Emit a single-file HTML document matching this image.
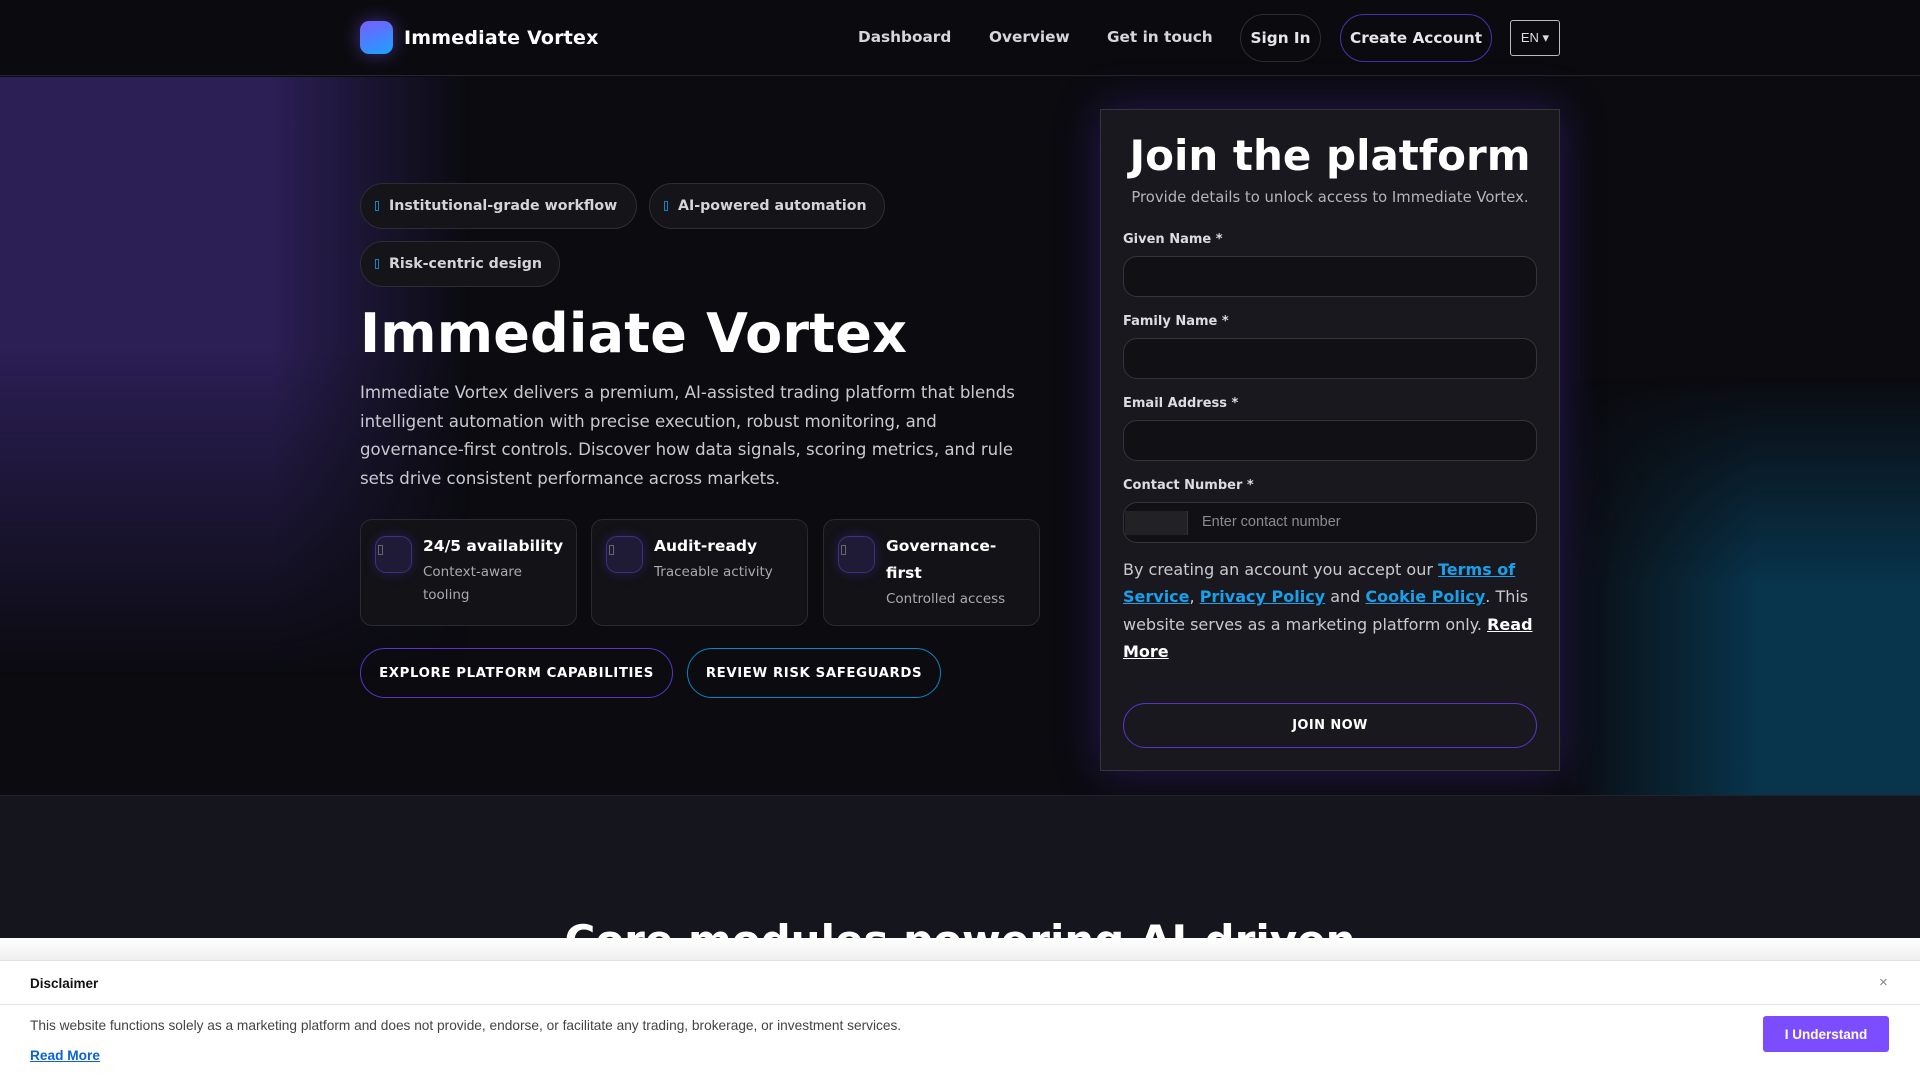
<!DOCTYPE html>
<html><head><meta charset="utf-8"><style>
*{box-sizing:border-box;margin:0;padding:0}
body{width:1920px;height:1080px;overflow:hidden;background:#0b0b10;font-family:"DejaVu Sans","Liberation Sans",sans-serif;color:#fff;position:relative}
.a{position:absolute}
.nav{left:0;top:0;width:1920px;height:76px;background:#0b0b0f;border-bottom:1px solid #25252d}
.logo{left:360px;top:21px;width:33px;height:33px;border-radius:9px;background:linear-gradient(160deg,#7b5cff,#1aa3ff);box-shadow:0 0 18px rgba(120,90,255,.45)}
.brand{left:404px;top:27px;font-size:19px;font-weight:bold;letter-spacing:.2px}
.nl{top:28px;font-size:15.3px;font-weight:bold;color:#d6d6dc}
.pill{border-radius:24px;border:1px solid #2c2c36;height:48px;top:14px;font-size:15.3px;font-weight:bold;color:#e6e6ea;display:flex;align-items:center;justify-content:center}
.hero{left:0;top:77px;width:1920px;height:718px;background:#0b0b10;overflow:hidden}
.gp{left:0;top:0;width:470px;height:600px;background:linear-gradient(to right,#2b1f55 0%,#2b1f55 58%,rgba(43,31,85,.5) 78%,transparent 100%);-webkit-mask-image:linear-gradient(to bottom,#000 0%,#000 45%,transparent 100%);mask-image:linear-gradient(to bottom,#000 0%,#000 45%,transparent 100%)}
.gt{left:1560px;top:300px;width:360px;height:418px;background:linear-gradient(to right,transparent 0%,rgba(8,52,74,.55) 30%,#08344c 55%,#08344c 100%);-webkit-mask-image:linear-gradient(to bottom,transparent 0%,#000 50%,#000 100%);mask-image:linear-gradient(to bottom,transparent 0%,#000 50%,#000 100%)}
.chip{height:46px;border:1px solid #2c2c34;border-radius:23px;background:#141419;display:flex;align-items:center;padding:0 14px;font-size:14.2px;font-weight:bold;color:#d4d4da;white-space:nowrap}
.chip i{display:inline-block;width:4px;height:10px;border:1px solid #1a7fc0;margin-right:10px}
h1{left:360px;top:302px;font-size:54px;font-weight:bold;letter-spacing:.2px;white-space:nowrap}
.p{left:360px;top:379px;width:668px;font-size:16.6px;line-height:28.5px;color:#c9c9d1}
.card{top:519px;width:217px;height:107px;border:1px solid #2a2a32;border-radius:12px;background:#121217}
.ic{left:14px;top:16px;width:37px;height:37px;border:1px solid #3f2f86;border-radius:11px;background:#1f1a35;box-shadow:0 0 12px rgba(90,60,200,.3)}
.ic:before{content:"";position:absolute;left:2px;top:8px;width:3px;height:8px;border:1px solid #666}
.ct{left:62px;top:13px;font-size:15.5px;font-weight:bold;line-height:27px;width:145px}
.cd{font-size:13.5px;color:#a9a9b2;line-height:23px;font-weight:normal;margin-top:1px}
.btn{top:648px;height:50px;border-radius:25px;display:flex;align-items:center;justify-content:center;font-size:13.3px;font-weight:bold;letter-spacing:.6px}
.form{left:1100px;top:109px;width:460px;height:662px;background:#18181e;border:1px solid #34343c;box-shadow:0 0 40px rgba(70,40,160,.45)}
.ft{left:0;width:458px;text-align:center}
.lb{left:22px;font-size:13px;font-weight:bold;color:#dcdce2}
.in{left:22px;width:414px;height:41px;border:1px solid #34343c;border-radius:14px;background:#111115}
.terms{left:22px;top:446px;width:420px;font-size:16px;line-height:27.3px;color:#c9c9d1}
.terms b{color:#1aa0ea;text-decoration:underline}
.terms u{color:#fff;font-weight:bold}
.low{left:0;top:795px;width:1920px;height:285px;background:#15151d;border-top:1px solid #22222a}
.disc{left:0;top:938px;width:1920px;height:142px;background:#fff;font-family:"Liberation Sans",Arial,sans-serif}
</style></head><body>
<div class="a nav"></div>
<div class="a logo"></div>
<div class="a brand">Immediate Vortex</div>
<div class="a nl" style="left:858px">Dashboard</div>
<div class="a nl" style="left:989px">Overview</div>
<div class="a nl" style="left:1107px">Get in touch</div>
<div class="a pill" style="left:1240px;width:81px">Sign In</div>
<div class="a pill" style="left:1340px;width:152px;border-color:#4a2fb0">Create Account</div>
<div class="a" style="left:1510px;top:20px;width:50px;height:36px;border:1px solid #bbb;border-radius:3px;font-size:13px;color:#ddd;display:flex;align-items:center;justify-content:center;font-family:'Liberation Sans',sans-serif">EN ▾</div>

<div class="a hero"><div class="a gp"></div><div class="a gt"></div></div>
<div class="a chip" style="left:360px;top:183px;width:277px"><i></i>Institutional-grade workflow</div>
<div class="a chip" style="left:649px;top:183px;width:236px"><i></i>AI-powered automation</div>
<div class="a chip" style="left:360px;top:241px;width:200px"><i></i>Risk-centric design</div>
<h1 class="a">Immediate Vortex</h1>
<div class="a p">Immediate Vortex delivers a premium, AI-assisted trading platform that blends intelligent automation with precise execution, robust monitoring, and governance-first controls. Discover how data signals, scoring metrics, and rule sets drive consistent performance across markets.</div>

<div class="a card" style="left:360px"><div class="a ic"></div><div class="a ct">24/5 availability<div class="cd">Context-aware tooling</div></div></div>
<div class="a card" style="left:591px"><div class="a ic"></div><div class="a ct">Audit-ready<div class="cd">Traceable activity</div></div></div>
<div class="a card" style="left:823px"><div class="a ic"></div><div class="a ct">Governance-first<div class="cd">Controlled access</div></div></div>

<div class="a btn" style="left:360px;width:313px;border:1px solid #5a34c8">EXPLORE PLATFORM CAPABILITIES</div>
<div class="a btn" style="left:687px;width:254px;border:1px solid #0b86c2">REVIEW RISK SAFEGUARDS</div>

<div class="a form">
<div class="a ft" style="top:21px;font-size:42px;font-weight:bold">Join the platform</div>
<div class="a ft" style="top:79px;font-size:14.8px;color:#b4b4bc">Provide details to unlock access to Immediate Vortex.</div>
<div class="a lb" style="top:122px">Given Name *</div>
<div class="a in" style="top:146px"></div>
<div class="a lb" style="top:204px">Family Name *</div>
<div class="a in" style="top:228px"></div>
<div class="a lb" style="top:286px">Email Address *</div>
<div class="a in" style="top:310px"></div>
<div class="a lb" style="top:368px">Contact Number *</div>
<div class="a in" style="top:392px"><div class="a" style="left:1px;top:8px;width:63px;height:24px;background:#222226;border-right:1px solid #333"></div><div class="a" style="left:78px;top:11px;font-family:'Liberation Sans',sans-serif;font-size:14.5px;color:#8a8a92">Enter contact number</div></div>
<div class="a terms">By creating an account you accept our <b>Terms of Service</b>, <b>Privacy Policy</b> and <b>Cookie Policy</b>. This website serves as a marketing platform only. <u>Read More</u></div>
<div class="a" style="left:22px;top:593px;width:414px;height:45px;border:1px solid #5a34c8;border-radius:23px;display:flex;align-items:center;justify-content:center;font-size:13px;font-weight:bold;letter-spacing:.4px">JOIN NOW</div>
</div>

<div class="a low"></div>
<div class="a" style="left:0;top:916px;width:1920px;text-align:center;font-size:42px;font-weight:bold">Core modules powering AI-driven</div>

<div class="a disc">
<div class="a" style="left:0;top:0;width:1920px;height:23px;background:linear-gradient(#fff,#efeff1);border-bottom:1px solid #e2e2e4"></div>
<div class="a" style="left:30px;top:38px;font-size:13.5px;font-weight:bold;color:#111">Disclaimer</div>
<div class="a" style="left:1879px;top:36px;font-size:15px;color:#888">×</div>
<div class="a" style="left:0;top:66px;width:1920px;border-top:1px solid #e4e4e6"></div>
<div class="a" style="left:30px;top:80px;font-size:13.7px;color:#444">This website functions solely as a marketing platform and does not provide, endorse, or facilitate any trading, brokerage, or investment services.</div>
<div class="a" style="left:30px;top:110px;font-size:13.7px;font-weight:bold;color:#0b62d6;text-decoration:underline">Read More</div>
<div class="a" style="left:1763px;top:78px;width:126px;height:36px;background:#7c4dff;border-radius:3px;display:flex;align-items:center;justify-content:center;font-size:13.5px;font-weight:bold;color:#fff">I Understand</div>
</div>
</body></html>
